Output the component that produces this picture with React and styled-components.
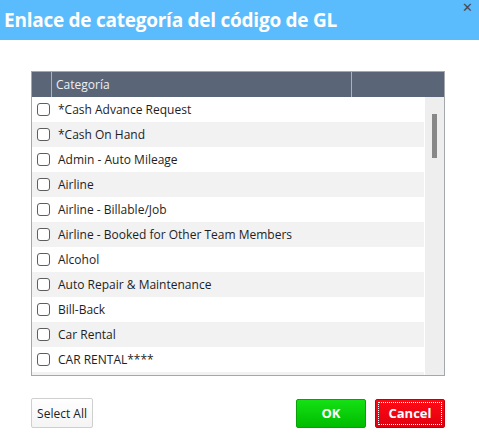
import React from "react";
import styled, { createGlobalStyle } from "styled-components";

const Global = createGlobalStyle`
  body { margin: 0; background: #fff; font-family: "Open Sans", "Liberation Sans", sans-serif; }
`;

const TitleBar = styled.div`
  position: relative;
  height: 40px;
  background: #5bbcfd;
  display: flex;
  align-items: center;
  padding-left: 4px;
`;

const Title = styled.h1`
  margin: 0;
  color: #fff;
  font-size: 19px;
  font-weight: 700;
  letter-spacing: -0.25px;
`;

const Close = styled.span`
  position: absolute;
  right: 6px;
  top: 1px;
  color: #4a4a4a;
  font-size: 13px;
  line-height: 13px;
  font-family: "DejaVu Sans", sans-serif;
`;

const Body = styled.div`
  padding: 31px 34px 0 31px;
`;

const Table = styled.div`
  border: 1px solid #a3a8ae;
  width: 412px;
`;

const Header = styled.div`
  display: grid;
  grid-template-columns: 19px 300px 1fr;
  height: 25px;
  background: #5a6578;
`;

const HeadCell = styled.div`
  border-left: ${(p) => (p.$first ? "none" : "1px solid #aab2be")};
  color: #eef0f3;
  font-size: 12px;
  padding-left: 4px;
  display: flex;
  align-items: center;
`;

const ListArea = styled.div`
  display: flex;
  height: 278px;
  overflow: hidden;
`;

const Rows = styled.div`
  flex: 1;
  margin-right: 1px;
`;

const Row = styled.label`
  display: flex;
  align-items: center;
  height: 25px;
  background: ${(p) => (p.$alt ? "#f2f2f2" : "#fff")};
  font-size: 12px;
  color: #1e1e1e;
`;

const Box = styled.span`
  width: 11px;
  height: 11px;
  border: 1px solid #5e5e5e;
  border-radius: 3px;
  margin: 0 8px 0 5px;
  background: #fff;
  flex: none;
`;

const Track = styled.div`
  width: 19px;
  background: #eeeeee;
  display: flex;
  justify-content: center;
  padding-top: 17px;
`;

const Thumb = styled.div`
  width: 5px;
  height: 44px;
  background: #888;
`;

const Footer = styled.div`
  display: flex;
  align-items: center;
  margin-top: 22px;
  width: 414px;
`;

const Button = styled.button`
  height: 30px;
  font-family: inherit;
  font-size: 12px;
  border-radius: 2px;
  padding: 0 5px;
  cursor: pointer;
`;

const PlainButton = styled(Button)`
  background: linear-gradient(#ffffff, #f4f4f4);
  border: 1px solid #cfcfcf;
  color: #222;
  width: 62px;
`;

const ColorButton = styled(Button)`
  width: 70px;
  height: 29px;
  color: #fff;
  font-weight: 700;
  font-size: 13px;
  margin-left: ${(p) => (p.$push ? "auto" : "9px")};
  background: ${(p) => p.$bg};
  border: 1px solid ${(p) => p.$edge};
  outline: ${(p) => (p.$focus ? "1px dotted #fff" : "none")};
  outline-offset: -4px;
`;

const items = [
  "*Cash Advance Request",
  "*Cash On Hand",
  "Admin - Auto Mileage",
  "Airline",
  "Airline - Billable/Job",
  "Airline - Booked for Other Team Members",
  "Alcohol",
  "Auto Repair & Maintenance",
  "Bill-Back",
  "Car Rental",
  "CAR RENTAL****",
];

export default function App() {
  return (
    <>
      <Global />
      <TitleBar>
        <Title>Enlace de categoría del código de GL</Title>
        <Close>✕</Close>
      </TitleBar>
      <Body>
        <Table>
          <Header>
            <HeadCell $first />
            <HeadCell>Categoría</HeadCell>
            <HeadCell />
          </Header>
          <ListArea>
            <Rows>
              {items.map((name, i) => (
                <Row key={name} $alt={i % 2 === 1}>
                  <Box />
                  {name}
                </Row>
              ))}
              {/* next row peeks in below the fold */}
              <Row $alt />
            </Rows>
            <Track>
              <Thumb />
            </Track>
          </ListArea>
        </Table>
        <Footer>
          <PlainButton>Select All</PlainButton>
          <ColorButton $push $bg="linear-gradient(#14e014, #00bc00)" $edge="#0aa00a">OK</ColorButton>
          <ColorButton $focus $bg="linear-gradient(#ff0a14, #e00010)" $edge="#c0000c">Cancel</ColorButton>
        </Footer>
      </Body>
    </>
  );
}
